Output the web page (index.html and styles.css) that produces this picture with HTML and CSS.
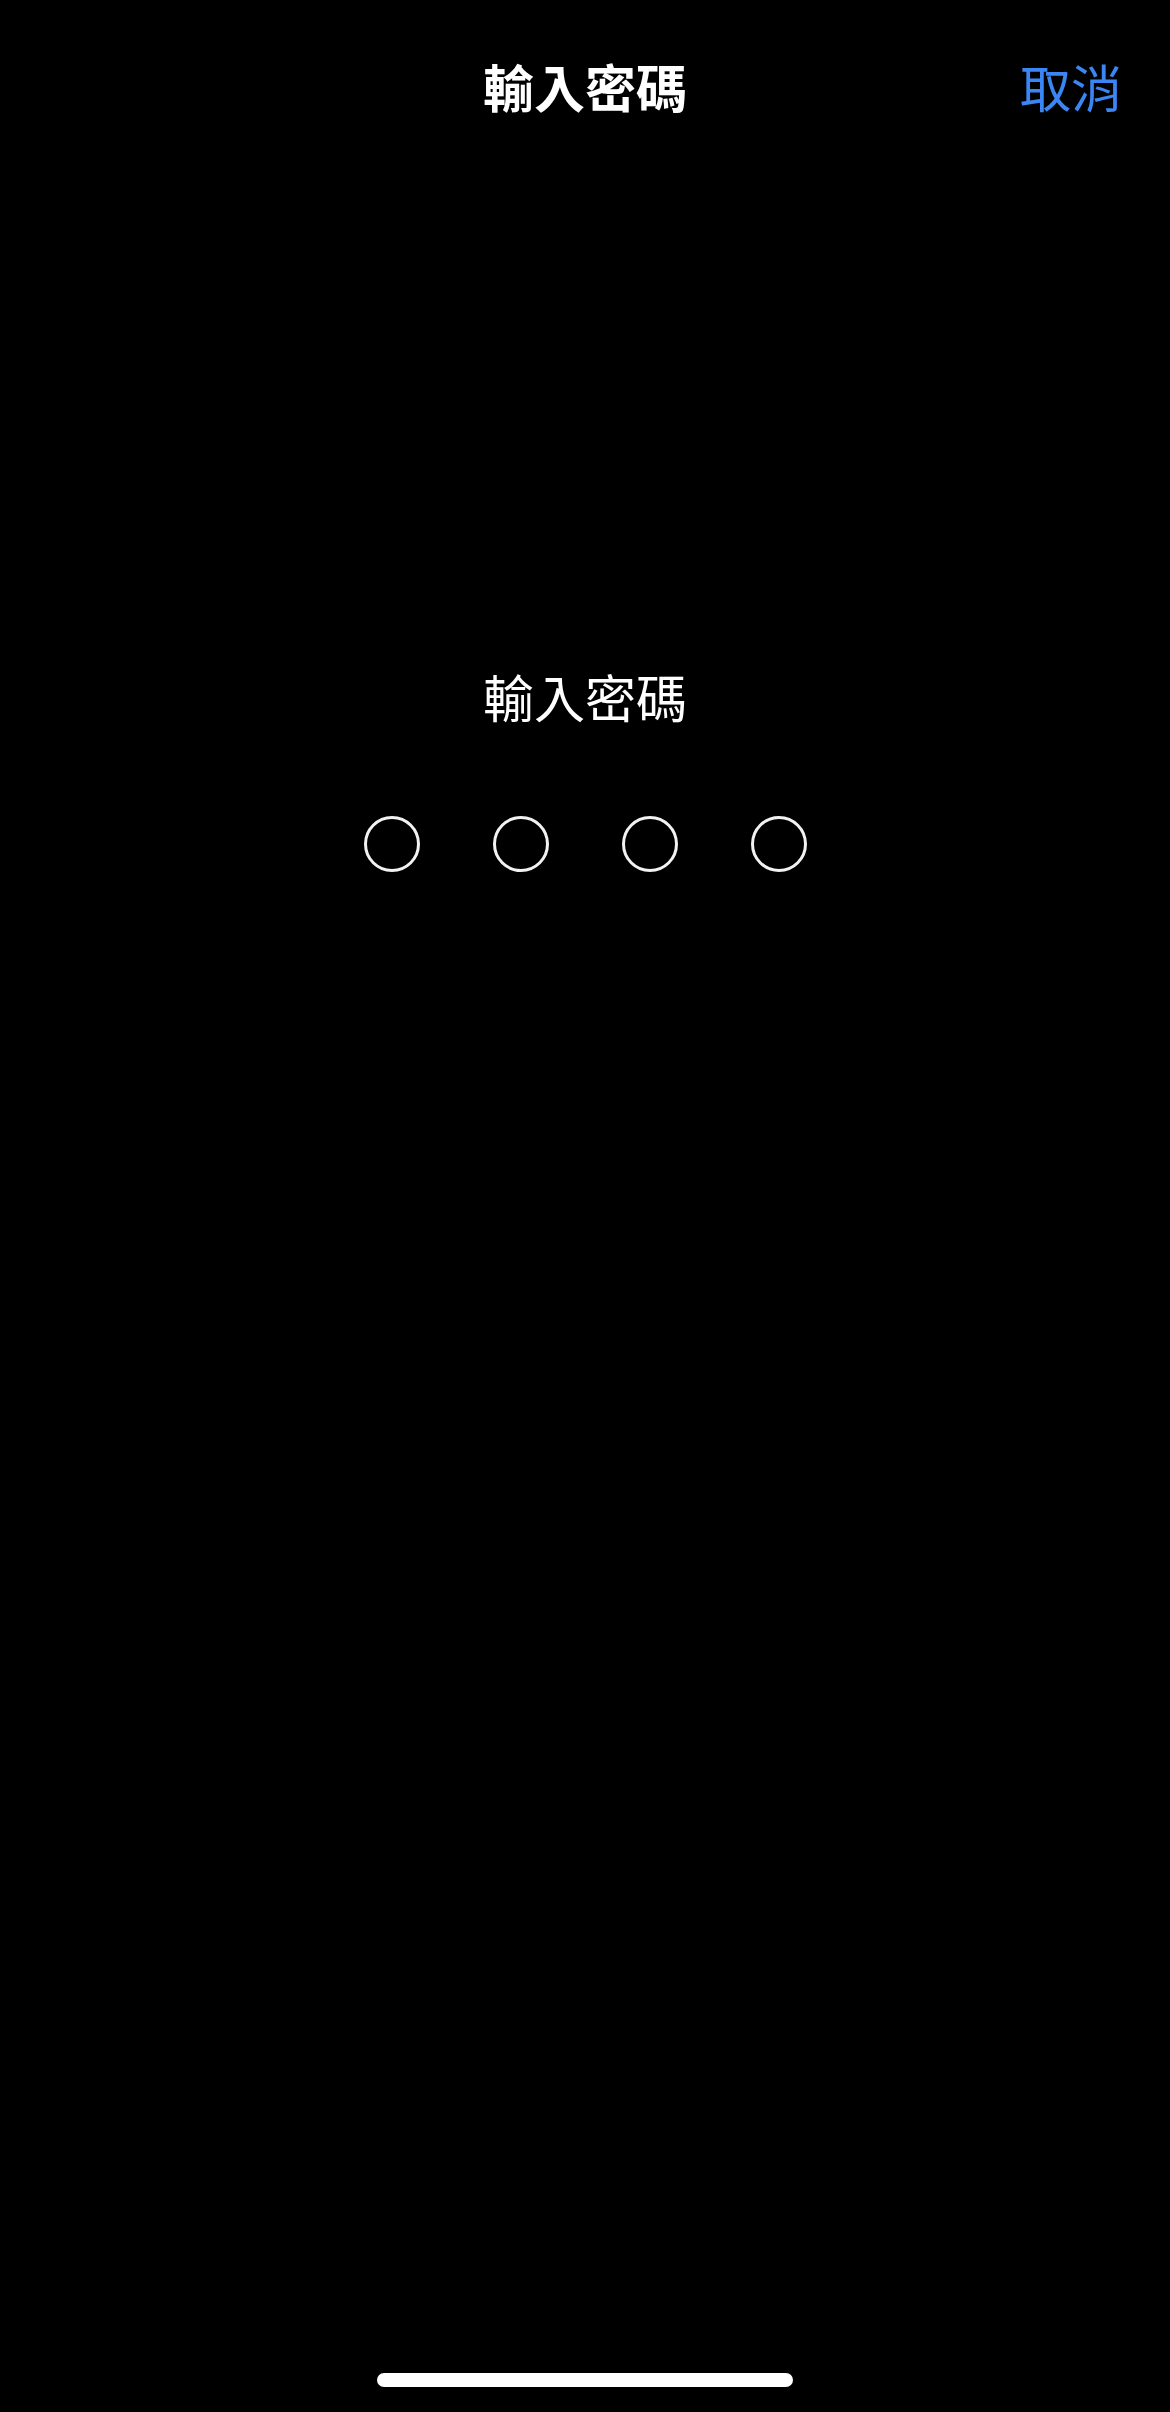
FILE: index.html
```html
<!DOCTYPE html>
<html lang="zh-Hant">
<head>
<meta charset="utf-8">
<title>輸入密碼</title>
<link rel="stylesheet" href="styles.css">
</head>
<body>
<div class="screen">
  <header class="nav">
    <div class="nav-side"></div>
    <h1 class="nav-title">輸入密碼</h1>
    <div class="nav-side nav-right"><span class="cancel">取消</span></div>
  </header>
  <main class="passcode">
    <p class="prompt">輸入密碼</p>
    <div class="dots">
      <span class="dot"></span>
      <span class="dot"></span>
      <span class="dot"></span>
      <span class="dot"></span>
    </div>
  </main>
  <footer class="home">
    <span class="home-bar"></span>
  </footer>
</div>
</body>
</html>
```
FILE: styles.css
```css
html, body {
  margin: 0;
  padding: 0;
  background: #000;
}
body {
  font-family: "Noto Sans CJK TC", "Noto Sans CJK SC", "Noto Sans", sans-serif;
  color: #fff;
}
.screen {
  display: flex;
  flex-direction: column;
  min-height: 2412px;
  width: 1170px;
}
.nav {
  display: grid;
  grid-template-columns: 1fr auto 1fr;
  align-items: center;
  padding: 61px 48px 0 48px;
}
.nav-title {
  margin: 0;
  font-size: 51px;
  line-height: 51px;
  font-weight: 700;
  color: #fff;
}
.nav-right {
  display: flex;
  justify-content: flex-end;
}
.cancel {
  font-size: 51px;
  line-height: 51px;
  color: #3a86f4;
}
.passcode {
  display: flex;
  flex-direction: column;
  align-items: center;
  padding-top: 559px;
}
.prompt {
  margin: 0;
  font-size: 51px;
  line-height: 51px;
  font-weight: 400;
  color: #fff;
}
.dots {
  display: flex;
  gap: 73px;
  margin-top: 94px;
}
.dot {
  width: 56px;
  height: 56px;
  box-sizing: border-box;
  border: 3px solid #f2f2f2;
  border-radius: 50%;
}
.home {
  margin-top: auto;
  display: flex;
  justify-content: center;
  padding-bottom: 25px;
}
.home-bar {
  width: 416px;
  height: 14px;
  border-radius: 7px;
  background: #fff;
}
```
